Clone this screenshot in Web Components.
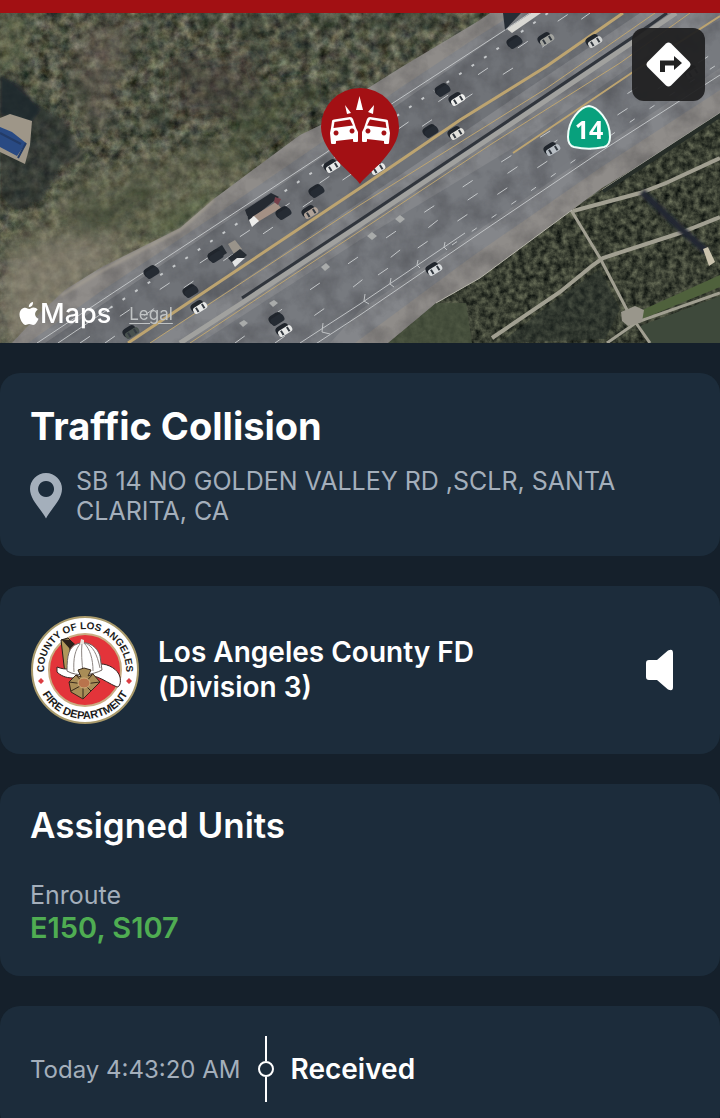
<!DOCTYPE html>
<html lang="en">
<head>
<meta charset="utf-8">
<meta name="viewport" content="width=device-width, initial-scale=1">
<title>Traffic Collision</title>
<style>
  body {
    margin: 0;
    background: #15202b;
    color: #fff;
    font-family: Inter, "Liberation Sans", sans-serif;
  }
</style>
</head>
<body>

<incident-screen>
  <incident-map slot="map" route="14"></incident-map>
  <info-card>
    <incident-summary heading="Traffic Collision">SB 14 NO GOLDEN VALLEY RD ,SCLR, SANTA CLARITA, CA</incident-summary>
  </info-card>
  <info-card>
    <agency-row>Los Angeles County FD (Division 3)</agency-row>
  </info-card>
  <info-card>
    <unit-list heading="Assigned Units" status="Enroute">E150, S107</unit-list>
  </info-card>
  <info-card>
    <timeline-entry time="Today 4:43:20 AM">Received</timeline-entry>
  </info-card>
</incident-screen>

<script>
class IncidentScreen extends HTMLElement {
  constructor() {
    super();
    this.attachShadow({ mode: 'open' });
    this.shadowRoot.innerHTML = `
      <style>
        :host {
          display: flex;
          flex-direction: column;
          height: 100vh;
          overflow-y: auto;
          scrollbar-width: none;
        }
        .alert {
          flex: none;
          height: 13px;
          background: #a21013;
        }
        main {
          display: flex;
          flex-direction: column;
          gap: 30px;
          padding: 30px 0;
        }
      </style>
      <div class="alert"></div>
      <slot name="map"></slot>
      <main><slot></slot></main>
    `;
  }
}
customElements.define('incident-screen', IncidentScreen);

// Satellite picture: scrub, freeway, orchard and traffic
class MapImagery extends HTMLElement {
  constructor() {
    super();
    this.attachShadow({ mode: 'open' });

    // x, y, body colour ('' leaves only the dark car)
    const cars = [
      [152, 272, ''], [191, 291, ''], [216, 256, ''], [284, 213, ''], [317, 191, ''],
      [131, 332, '#48514e'], [199, 307, '#e8e9e8'], [284, 330, '#e8e9e8'], [277, 319, ''],
      [332, 166, '#e8e9e8'], [377, 168, '#e8e9e8'], [310, 212, '#b1a398'],
      [457, 99, '#f0f0ee'], [456, 133, '#e4e2dd'], [443, 90, ''], [431, 131, ''],
      [515, 42, ''], [546, 39, '#a3a49f'], [594, 41, '#d2d3d2'], [552, 149, '#b9bfc5'],
      [434, 269, '#d9dcde'], [692, 72, '#8b8c8c']
    ];
    const traffic = cars.map(([x, y, body]) => `
      <g transform="translate(${x} ${y}) rotate(-32)">
        <rect x="-8" y="-6" width="14" height="9" rx="4" fill="#20252c"/>
        ${body
          ? `<rect x="-7" y="-2" width="15" height="7" rx="3" fill="${body}"/>
             <rect x="-4" y="-1" width="2" height="5" fill="#333940"/>
             <rect x="3" y="-1" width="2" height="5" fill="#333940"/>`
          : '<rect x="-7" y="-3" width="14" height="8" rx="3" fill="#252b33"/>'}
      </g>`).join('');

    this.shadowRoot.innerHTML = `
      <style>
        :host { display: block; height: 100%; }
        svg { display: block; width: 100%; height: 100%; }
      </style>
      <svg viewBox="0 13 720 330" preserveAspectRatio="xMidYMid slice" aria-hidden="true">
        <defs>
          <filter id="scrub" x="0" y="0" width="100%" height="100%" color-interpolation-filters="sRGB">
            <feTurbulence type="fractalNoise" baseFrequency=".1" numOctaves="5" seed="8"/>
            <feColorMatrix values=".55 .1 0 0 0  .55 0 0 0 .06  .45 0 .1 0 0  0 0 0 0 1"/>
            <feComposite in2="SourceGraphic" operator="in"/>
          </filter>
          <filter id="clumps" x="0" y="0" width="100%" height="100%" color-interpolation-filters="sRGB">
            <feTurbulence type="fractalNoise" baseFrequency=".03" numOctaves="4" seed="21"/>
            <feColorMatrix values="0 0 0 0 .15  0 0 0 0 .2  0 0 0 0 .16  2 0 0 0 -.9"/>
            <feComposite in2="SourceGraphic" operator="in"/>
          </filter>
          <filter id="orchard" x="0" y="0" width="100%" height="100%" color-interpolation-filters="sRGB">
            <feTurbulence type="fractalNoise" baseFrequency=".16" numOctaves="4" seed="3"/>
            <feColorMatrix values=".5 0 0 0 -.02  .5 0 0 0 0  .4 0 0 0 0  0 0 0 0 1"/>
            <feComposite in2="SourceGraphic" operator="in"/>
          </filter>
          <filter id="grain" x="0" y="0" width="100%" height="100%" color-interpolation-filters="sRGB">
            <feTurbulence type="fractalNoise" baseFrequency=".04" numOctaves="5" seed="5"/>
            <feColorMatrix values="0 0 0 0 .1  0 0 0 0 .1  0 0 0 0 .12  .5 0 0 0 -.18"/>
            <feComposite in2="SourceGraphic" operator="in"/>
          </filter>
          <filter id="haze" x="-20%" y="-20%" width="140%" height="140%">
            <feGaussianBlur stdDeviation="9"/>
          </filter>
          <filter id="soft"><feGaussianBlur stdDeviation="1.5"/></filter>
        </defs>

        <rect y="13" width="720" height="330" fill="#4b5344" filter="url(#scrub)"/>
        <path d="M0 13H500L360 120 160 240 0 260z" filter="url(#clumps)" opacity=".6"/>
        <g filter="url(#haze)">
          <path d="M0 240L90 170 230 140 260 175 150 245 50 343H0z" fill="#77785c" opacity=".4"/>
          <path d="M0 260L60 235 130 240 30 343H0z" fill="#958d82" opacity=".55"/>
          <path d="M90 25l45 0-20 75-22 45-20-90z" fill="#77695f" opacity=".4"/>
          <path d="M175 60l80-10 10 60-90 10z" fill="#4b3f3e" opacity=".35"/>
          <path d="M0 13h30L18 70 0 75z" fill="#6f7a58" opacity=".5"/>
          <path d="M75 220l70-40 20 10-60 40z" fill="#2d3c2b" opacity=".5"/>
          <path d="M240 95l85-15-70 75-40 20z" fill="#3c4a33" opacity=".4"/>
          <path d="M140 235l70-45 10 5-50 40z" fill="#5d7047" opacity=".6"/>
        </g>
        <g filter="url(#soft)">
          <path d="M0 74l34 28 30 18 22 40-25 6-20 35-25 10-16-15z" fill="#272b2b" opacity=".6"/>
          <path d="M0 76l20 8 20 26-8 12-32-8z" fill="#20262c" opacity=".8"/>
          <path d="M42 83l32 11 6 12M67 165l22-17M105 100l-5 28" stroke="#918d78" stroke-width="1" fill="none"/>
        </g>
        <path d="M0 118l10-4 22 7-2 24-5 19-25-12z" fill="#9e9688"/>
        <path d="M0 127l12 5 14 11-9 13-17-9z" fill="#294a83"/>
        <path d="M0 133l21 11M18 158l8-15" stroke="#233b66" stroke-width="2"/>

        <!-- orchard and its access roads -->
        <path d="M388 343L436 303 480 278 572 210 602 190 640 165 720 113V343z" fill="#384133" filter="url(#orchard)"/>
        <path d="M388 343l48-40 30 0 6 40z" fill="#48523f" opacity=".8"/>
        <path d="M640 311l80-36v12l-80 33z" fill="#4f613c"/>
        <path d="M640 326l80-30v47H650z" fill="#3e493b"/>
        <path d="M500 343l60-46 40-28 20 40-15 30z" fill="#252d29" opacity=".5"/>
        <g fill="none" stroke="#a19f91">
          <path d="M573 211l67-18 26-10 54-25" stroke-width="4"/>
          <path d="M492 338l68-46 33-27 10-7 77-25 40-16" stroke-width="4"/>
          <path d="M607 343l30-21 83-29" stroke-width="3"/>
          <path d="M571 210l29 48 27 52 23 33" stroke-width="3"/>
        </g>
        <path d="M621 312l14-6 9 4-2 12-14 4-6-5z" fill="#99968b"/>
        <path d="M642 192l40 38 25 22" stroke="#202830" stroke-width="7" fill="none" filter="url(#soft)"/>
        <path d="M703 249l5-2 7 15-6 4z" fill="#cbc3ae"/>

        <!-- roadway -->
        <path d="M12 343L40 313 65 290 100 268 180 228 215 198 300 135 325 123 365 90 400 68 480 20 490 13H720V113L640 165 602 188 572 210 480 278 436 303 388 343z" fill="#8f8c89"/>
        <path d="M28 343L100 292 220 212 325 140 400 88 480 35 515 13H720V90L600 168 470 258 355 343z" fill="#84868a"/>
        <path d="M45 343L327 154 530 13H640L360 202 150 343z" fill="#707378"/>
        <path d="M300 343L520 168 720 25V68L600 148 360 310 330 343z" fill="#787b80"/>
        <path d="M200 343L360 240 513 148 640 60 720 20V60L600 140 300 343z" fill="#777a7f"/>
        <path d="M12 343L40 313 65 290 100 268 180 228 215 198 300 135 325 123 365 90 400 68 480 20 490 13H720V113L640 165 602 188 572 210 480 278 436 303 388 343z" filter="url(#grain)"/>
        <path d="M436 303l44-25 92-68M602 190l38-25 80-52" stroke="#b6b4aa" stroke-width="1" fill="none"/>
        <path d="M602 190l38-25 80-52v5l-80 52-36 23z" fill="#262d28"/>
        <path d="M60 296l45-27 75-39 34-30" stroke="#aca597" stroke-width="2" fill="none" filter="url(#soft)"/>

        <path d="M180 343L242 303 360 225 490 138 633 42 676 13" stroke="#a1a19e" stroke-width="5" fill="none"/>
        <path d="M242 298L360 220 490 133 633 37 667 13" stroke="#30353c" stroke-width="3" fill="none"/>

        <g fill="none" stroke="#c0c3c5" stroke-width="1">
          <path d="M37 343L137 277 327 152 393 103 502 32 530 13"/>
          <path d="M58 343L110 308"/>
          <path d="M285 364L360 315 480 233 600 152 720 75"/>
          <path d="M300 343L360 304 465 233M330 334l-8-2 1-9M369 304l-5-3 1-7M394 287l-4-3 1-6M420 268l-3-3 1-5M447 250l-3-3 1-5"/>
        </g>
        <g fill="none" stroke="#bda470" stroke-width="1">
          <path d="M128 343L360 188 460 120 547 66 623 13" stroke-width="3"/>
          <path d="M150 343L360 205 547 88 655 13"/>
          <path d="M190 343L360 231 493 143 620 63 690 13"/>
          <path d="M513 153L633 72 720 16" stroke-width="2"/>
        </g>
        <g fill="none" stroke="#c5c8ca" stroke-width="1">
          <path d="M110 308L188 257 313 172 413 105 490 54 548 13" stroke-width="2" stroke-dasharray="3 12"/>
          <path d="M80 343L165 286 247 232 327 178 407 123 482 72 570 13" stroke-dasharray="12 36"/>
          <path d="M105 343L195 280 313 200 430 121 513 68 590 13" stroke-dasharray="12 36"/>
          <path d="M235 343L292 302 408 223 487 171 580 112" stroke-dasharray="12 34"/>
          <path d="M275 343L338 299 438 220 517 167 622 97 700 48" stroke-dasharray="12 36"/>
          <path d="M378 275L459 220 540 166 622 112 715 52" stroke-dasharray="12 36"/>
          <path d="M452 245L532 190 572 162 652 107 718 64" stroke-dasharray="6 18"/>
        </g>
        <path fill="#a9abaa" d="M321 267l5-4 4 4-5 4zM269 303l5-3 4 3-5 4zM367 236l5-4 5 4-5 4zM395 219l5-4 5 4-5 4zM239 323l5-3 4 3-5 4z"/>

        <path d="M245 210l26-17 8 4-30 24z" fill="#252a31"/>
        <path d="M252 217l24-15 5 6-25 15z" fill="#a49084"/>
        <path d="M249 220l5-4 5 5-7 6z" fill="#eeeeec"/>
        <path d="M275 197l6 2-3 6-4-3z" fill="#76404a"/>
        <path d="M208 254l14-9 5 8-14 9z" fill="#252b32"/>
        <path d="M228 244l7-4 7 9-8 5z" fill="#99938a"/>
        <path d="M228 258l12-9 7 6-12 11z" fill="#262c33"/>
        <path d="M232 262l5-4 8 0-10 9z" fill="#e4e5e5"/>
        <path d="M503 13h18l-16 17z" fill="#262d35"/>
        <path d="M507 29l24-16h10l-29 20z" fill="#d9d8d3"/>
        ${traffic}
      </svg>
    `;
  }
}
customElements.define('map-imagery', MapImagery);

class IncidentMap extends HTMLElement {
  constructor() {
    super();
    this.attachShadow({ mode: 'open' });
    this.shadowRoot.innerHTML = `
      <style>
        :host {
          display: block;
          position: relative;
          flex: none;
          height: 330px;
          overflow: hidden;
        }
        svg { display: block; }
        .pin {
          position: absolute;
          left: 50%;
          top: 74px;
          margin-left: -40px;
        }
        .shield {
          position: absolute;
          left: 566px;
          top: 91px;
        }
        .shield text {
          font: 700 25px "Open Sans", sans-serif;
        }
        button {
          position: absolute;
          right: 15px;
          top: 15px;
          width: 73px;
          height: 73px;
          padding: 14px;
          border: 0;
          border-radius: 12px;
          background: rgba(32, 32, 33, .94);
          cursor: pointer;
        }
        .credit {
          position: absolute;
          left: 19px;
          bottom: 12px;
          display: flex;
          align-items: center;
          line-height: 34px;
        }
        .brand {
          margin-left: 1px;
          font-size: 27px;
          font-weight: 500;
        }
        a {
          margin-left: 18px;
          color: #c0c3c4;
          font-size: 17px;
          text-underline-offset: 3px;
        }
      </style>
      <map-imagery></map-imagery>
      <svg class="shield" width="46" height="46" viewBox="0 0 46 46">
        <path d="M23 2C31 3 44 15 44 33C44 39 42 42 38 43C29 45 17 45 8 43C4 42 2 39 2 33C2 15 15 3 23 2Z" fill="#08a17d" stroke="#effffa" stroke-width="2"/>
        <text id="route" x="23" y="35" text-anchor="middle" fill="#fff"></text>
      </svg>
      <svg class="pin" width="80" height="98" viewBox="0 0 80 98" aria-hidden="true">
        <path d="M40 97C35 88 1 66 1 40a39 39 0 0 1 78 0C79 66 45 88 40 97z" fill="#a31014"/>
        <g fill="#fff">
          <path d="M39.500 9L43 23h-7zM25 18l6 8-4 1zM54 18l-1 9-5-2z"/>
          <path id="car" fill-rule="evenodd" d="M14 32.500L30 30q2 0 3 2l3 9 2 4v9q0 1-1 1h-3q-1 0-1-1v-2l-17 2v2q0 1-1 1h-3q-1 0-1-1l-1-10 1-5 1-7q0-1.500 2-1.500zm.5 2.500l-1 6L33 38.500l-3-6zM16 43.500a2.500 2.500 0 1 0 .1 0zM32 41.500a2.500 2.500 0 1 0 .1 0z"/>
          <use href="#car" transform="matrix(-1 0 0 1 80 0)"/>
        </g>
      </svg>
      <button type="button" aria-label="Directions">
        <svg width="45" height="45" viewBox="0 0 45 45">
          <path d="M20 1.500q2.500-2 5 0L43.500 20q2 2.500 0 5L25 43.500q-2.500 2-5 0L1.500 25q-2-2.500 0-5z" fill="#fff"/>
          <path d="M14 30V18.500h14V14l8 7-8 7v-4.500H19V30z" fill="#222"/>
        </svg>
      </button>
      <div class="credit">
        <svg width="20" height="24" viewBox="0 0 20 24" aria-hidden="true">
          <path d="M14 0c.3 3-1.500 5-4.200 5C9.600 2.400 11.500.400 14 0zM10.200 7C11.400 7 12.500 5.600 14.500 5.600c1.700 0 3.300.900 4.200 2.200-3.900 2.300-3.200 7.500.800 8.900C18.600 19 16.500 23 14.200 23c-1.500 0-2.100-.900-3.800-.900S7.900 23 6.600 23C3.900 23 .500 17.300.500 12.600.500 8.200 3.300 5.700 6.200 5.700c1.700 0 2.900 1.300 4 1.300z" fill="#fff"/>
        </svg>
        <span class="brand">Maps</span>
        <a href="#legal">Legal</a>
      </div>
    `;
  }

  connectedCallback() {
    this.shadowRoot.getElementById('route').textContent = this.getAttribute('route');
  }
}
customElements.define('incident-map', IncidentMap);

class InfoCard extends HTMLElement {
  constructor() {
    super();
    this.attachShadow({ mode: 'open' });
    this.shadowRoot.innerHTML = `
      <style>
        :host {
          display: block;
          padding: 30px;
          border-radius: 20px;
          background: #1c2c3b;
        }
      </style>
      <slot></slot>
    `;
  }
}
customElements.define('info-card', InfoCard);

class IncidentSummary extends HTMLElement {
  constructor() {
    super();
    this.attachShadow({ mode: 'open' });
    this.shadowRoot.innerHTML = `
      <style>
        :host { display: block; }
        h1 {
          margin: 0 0 17px;
          font-size: 38px;
          font-weight: 700;
          line-height: 46px;
        }
        .place {
          display: flex;
          align-items: center;
          gap: 14px;
          color: #a4afbb;
        }
        svg { flex: none; }
        p {
          margin: 0;
          font-size: 25px;
          line-height: 30px;
        }
      </style>
      <h1></h1>
      <div class="place">
        <svg width="32" height="46" viewBox="0 0 32 46" aria-hidden="true">
          <path fill="currentColor" fill-rule="evenodd" d="M16 45.500C12 37 0 27 0 16a16 16 0 0 1 32 0C32 27 20 37 16 45.500zM16 8a8 8 0 1 0 .1 0z"/>
        </svg>
        <p><slot></slot></p>
      </div>
    `;
  }

  connectedCallback() {
    this.shadowRoot.querySelector('h1').textContent = this.getAttribute('heading');
  }
}
customElements.define('incident-summary', IncidentSummary);

class AgencySeal extends HTMLElement {
  constructor() {
    super();
    this.attachShadow({ mode: 'open' });
    this.shadowRoot.innerHTML = `
      <style>
        :host { display: block; flex: none; }
        svg { display: block; }
        text {
          font-family: "Liberation Sans", sans-serif;
          font-weight: 700;
          fill: #1d1c1b;
          text-anchor: middle;
        }
        .top { font-size: 10px; }
        .bottom { font-size: 11px; }
      </style>
      <svg width="110" height="108" viewBox="0 0 110 108">
        <defs>
          <path id="over" d="M55 95A41 41 0 0 1 55 13A41 41 0 0 1 55 95"/>
          <path id="under" d="M6 54A49 49 0 0 0 104 54"/>
        </defs>
        <circle cx="55" cy="54" r="53" fill="#fff" stroke="#a99a6b" stroke-width="2"/>
        <circle cx="55" cy="54" r="36" fill="#e3343a" stroke="#c9ac82" stroke-width="2"/>
        <text class="top"><textPath href="#over" startOffset="50%">COUNTY OF LOS ANGELES</textPath></text>
        <text class="bottom"><textPath href="#under" startOffset="50%">FIRE DEPARTMENT</textPath></text>
        <path d="M11 62l3 3-3 3-3-3zM99 62l3 3-3 3-3-3z" fill="#dc3d43"/>
        <!-- helmet -->
        <path d="M31 24l7-2 5 5-3 5-1 27-4-1z" fill="#b0985b" stroke="#262019"/>
        <path d="M31 23l9 1 5 4-5 5z" fill="#2a211b"/>
        <path d="M27 51c5 2 8 2 12 2L71 48c7 0 17 5 19 13 1 5 0 10-3 10-7-3-14-8-20-10-9-2-15 1-24 1-8 0-13-3-16-6z" fill="#fff" stroke="#382321"/>
        <path d="M37 55c0-16 2-24 10-27 10-4 20 2 23 12l2 14c-9 5-25 7-35 1z" fill="#fff" stroke="#6d6461"/>
        <path d="M51 27c-6 6-8 16-7 29M52 27c-1 9 0 20 1 30M54 27c6 6 9 16 9 28M55 27c8 3 12 11 15 25" fill="none" stroke="#8c8581"/>
        <path d="M51 23l3 1v4h-4z" fill="#e9e4dd"/>
        <path d="M39 66l7-7 5 2-3-7 6-2 7 2-3 6 5-2 7 8-9 9-8 8-12-7z" fill="#a98d57" stroke="#37281a"/>
        <path d="M39 66l15 2 16-2M46 59l8 9 8-9M41 75l13-7 7 7M53 82V68" fill="none" stroke="#37281a"/>
        <ellipse cx="54" cy="67" rx="6" ry="5" fill="#b9744c" stroke="#cfb07a"/>
      </svg>
    `;
  }
}
customElements.define('agency-seal', AgencySeal);

class AgencyRow extends HTMLElement {
  constructor() {
    super();
    this.attachShadow({ mode: 'open' });
    this.shadowRoot.innerHTML = `
      <style>
        :host {
          display: flex;
          align-items: center;
          gap: 18px;
        }
        .name {
          flex: 1;
          font-size: 28px;
          font-weight: 600;
          line-height: 35px;
        }
        .name span {
          display: block;
          max-width: 360px;
        }
        button {
          flex: none;
          padding: 10px 16px;
          border: 0;
          background: none;
          cursor: pointer;
        }
        svg { display: block; }
      </style>
      <agency-seal></agency-seal>
      <div class="name"><span><slot></slot></span></div>
      <button type="button" aria-label="Listen">
        <svg width="28" height="42" viewBox="0 0 28 42">
          <path d="M3 11h8L22 1.500Q27-1 27 4v34q0 5-5 2.500L11 31H3q-3 0-3-3V14q0-3 3-3z" fill="#fff"/>
        </svg>
      </button>
    `;
  }
}
customElements.define('agency-row', AgencyRow);

class UnitList extends HTMLElement {
  constructor() {
    super();
    this.attachShadow({ mode: 'open' });
    this.shadowRoot.innerHTML = `
      <style>
        :host { display: block; }
        h2 {
          margin: -9px 0 35px;
          font-size: 35px;
          font-weight: 600;
          line-height: 40px;
        }
        p { margin: 0; }
        .status {
          color: #a4afbb;
          font-size: 25px;
          line-height: 30px;
        }
        .units {
          color: #4fad52;
          font-size: 29px;
          font-weight: 600;
          line-height: 36px;
        }
      </style>
      <h2></h2>
      <p class="status"></p>
      <p class="units"><slot></slot></p>
    `;
  }

  connectedCallback() {
    this.shadowRoot.querySelector('h2').textContent = this.getAttribute('heading');
    this.shadowRoot.querySelector('.status').textContent = this.getAttribute('status');
  }
}
customElements.define('unit-list', UnitList);

class TimelineEntry extends HTMLElement {
  constructor() {
    super();
    this.attachShadow({ mode: 'open' });
    this.shadowRoot.innerHTML = `
      <style>
        :host {
          display: flex;
          align-items: center;
          gap: 16px;
        }
        time {
          color: #a4afbb;
          font-size: 24px;
        }
        svg { flex: none; }
        .event {
          font-size: 28px;
          font-weight: 600;
        }
      </style>
      <time></time>
      <svg width="18" height="66" viewBox="0 0 18 66" fill="none" stroke="#fff" stroke-width="2" aria-hidden="true">
        <path d="M9 0v25M9 41v25"/>
        <circle cx="9" cy="33" r="7"/>
      </svg>
      <span class="event"><slot></slot></span>
    `;
  }

  connectedCallback() {
    this.shadowRoot.querySelector('time').textContent = this.getAttribute('time');
  }
}
customElements.define('timeline-entry', TimelineEntry);
</script>
</body>
</html>
